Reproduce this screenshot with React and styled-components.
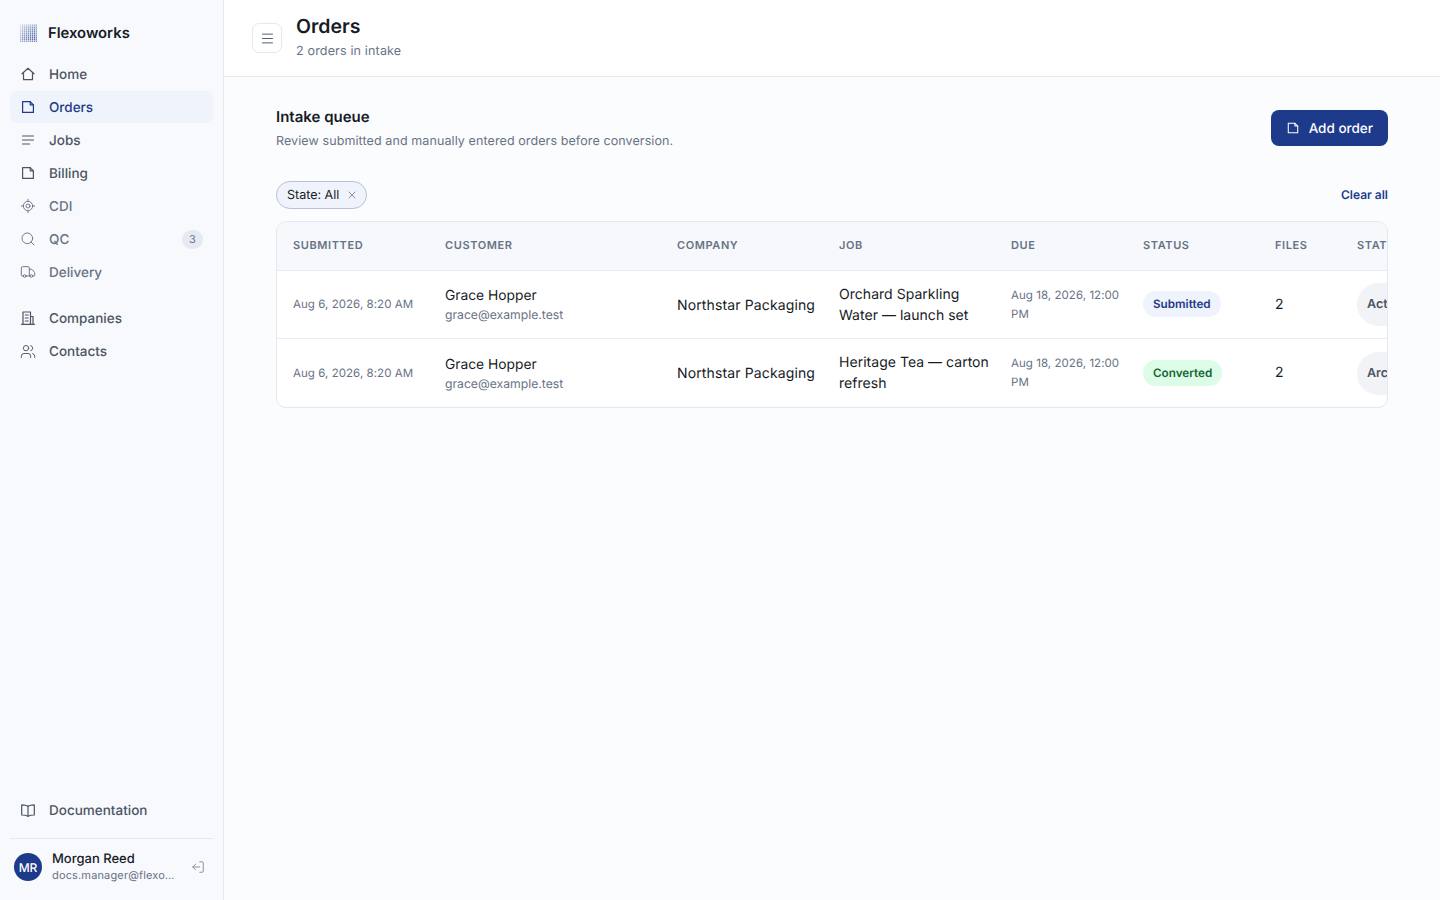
import styled, { createGlobalStyle } from 'styled-components';
import { LocateFixed, LogOut, Menu, Search, Truck, Users, X } from 'lucide-react';

const GlobalStyle = createGlobalStyle`
  html, body { margin: 0; height: 100%; }
  body {
    font-family: Inter, "Liberation Sans", sans-serif;
    color: #171b26;
    background: #fbfcfe;
    text-rendering: geometricPrecision;
  }
  * { box-sizing: border-box; }
`;

const Shell = styled.div`
  display: flex;
  width: 1440px;
  height: 900px;
  overflow: hidden;
`;

//! Sidebar
const Sidebar = styled.aside`
  flex: 0 0 224px;
  display: flex;
  flex-direction: column;
  padding: 0 10px 5px;
  background: #f7f9fd;
  border-right: 1px solid #e4e8ef;
`;

const Brand = styled.div`
  display: flex;
  align-items: center;
  gap: 11px;
  height: 58px;
  padding: 7px 0 0 9px;
  font-size: 14.8px;
  font-weight: 600;
  color: #171b26;
`;

const NavGroup = styled.nav`
  display: flex;
  flex-direction: column;
  gap: 1px;
  margin-bottom: ${(p) => p.$gap || 0}px;
`;

const NavItem = styled.div`
  display: flex;
  align-items: center;
  gap: 13px;
  height: 32px;
  padding: 0 10px;
  border-radius: 8px;
  font-size: 13.5px;
  font-weight: 500;
  color: ${(p) => (p.$active ? '#1e3a8a' : p.$muted ? '#687285' : '#4b5563')};
  background: ${(p) => (p.$active ? '#eff3fb' : 'transparent')};
  svg { flex: 0 0 16px; }
`;

const NavLabel = styled.span`
  flex: 1;
  padding-top: 2px;
`;

const CountBadge = styled.span`
  display: flex;
  align-items: center;
  justify-content: center;
  width: 21px;
  height: 19px;
  border-radius: 10px;
  background: #e5eaf2;
  color: #687285;
  font-size: 11px;
  font-weight: 400;
`;

const SidebarBottom = styled.div`
  margin-top: auto;
`;

const UserRow = styled.div`
  display: flex;
  align-items: center;
  height: 57px;
  margin-top: 12px;
  padding: 0 8px 0 4px;
  border-top: 1px solid #e4e8ef;
`;

const Avatar = styled.div`
  display: flex;
  align-items: center;
  justify-content: center;
  flex: 0 0 28px;
  height: 28px;
  border-radius: 50%;
  background: #1e3a8a;
  color: #fff;
  font-size: 12px;
  font-weight: 500;
`;

const UserInfo = styled.div`
  flex: 1;
  min-width: 0;
  margin-left: 10px;
`;

const UserName = styled.div`
  font-size: 13px;
  font-weight: 500;
  line-height: 16px;
  color: #171b26;
`;

const UserMail = styled.div`
  width: 124px;
  font-size: 11px;
  line-height: 16px;
  letter-spacing: 0.15px;
  color: #687285;
  white-space: nowrap;
  overflow: hidden;
  text-overflow: ellipsis;
`;

const SignOut = styled.span`
  display: flex;
  color: #7c8594;
`;

//! Main
const Main = styled.main`
  flex: 1;
  min-width: 0;
  display: flex;
  flex-direction: column;
`;

const TopBar = styled.header`
  display: flex;
  align-items: center;
  gap: 14px;
  height: 77px;
  padding: 0 28px;
  background: #fff;
  border-bottom: 1px solid #e4e8ef;
`;

const MenuButton = styled.button`
  display: flex;
  align-items: center;
  justify-content: center;
  width: 30px;
  height: 30px;
  padding: 0;
  border: 1px solid #e4e8ef;
  border-radius: 7px;
  background: #fff;
  color: #4b5563;
`;

const PageTitle = styled.h1`
  margin: 0;
  font-size: 19.5px;
  font-weight: 600;
  line-height: 24px;
  color: #171b26;
`;

const PageSub = styled.div`
  margin-top: 4px;
  font-size: 12.5px;
  line-height: 20px;
  letter-spacing: 0.17px;
  color: #687285;
`;

const Content = styled.div`
  padding: 30px 52px 0;
`;

const SectionHead = styled.div`
  display: flex;
  align-items: flex-start;
  justify-content: space-between;
  height: 74px;
`;

const SectionTitle = styled.h2`
  margin: 0;
  font-size: 15px;
  font-weight: 600;
  line-height: 20px;
  color: #171b26;
`;

const SectionSub = styled.p`
  margin: 5px 0 0;
  font-size: 12.5px;
  line-height: 20px;
  letter-spacing: 0.1px;
  color: #687285;
`;

const AddButton = styled.button`
  display: flex;
  align-items: center;
  gap: 9px;
  height: 36px;
  margin-top: 3px;
  padding: 2px 15px 0;
  border: 0;
  border-radius: 8px;
  background: #1e3a8a;
  color: #fff;
  font-family: inherit;
  font-size: 13.5px;
  font-weight: 500;
  text-rendering: inherit;
  svg { margin-top: -2px; }
`;

const FilterRow = styled.div`
  display: flex;
  align-items: center;
  justify-content: space-between;
  height: 28px;
  margin-bottom: 12px;
`;

const FilterChip = styled.div`
  display: flex;
  align-items: center;
  gap: 7px;
  height: 28px;
  padding: 0 8px 0 10px;
  border: 1px solid #b9c2d6;
  border-radius: 14px;
  background: #eff3fb;
  color: #171b26;
  font-size: 12.5px;
  font-weight: 400;
  svg { color: #687285; }
`;

const ClearAll = styled.span`
  padding-bottom: 2px;
  font-size: 12px;
  font-weight: 600;
  color: #1e3a8a;
`;

const TableWrap = styled.div`
  border: 1px solid #e4e8ef;
  border-radius: 10px;
  overflow: hidden;
  background: #fff;
`;

const Table = styled.table`
  width: 1250px;
  table-layout: fixed;
  border-collapse: collapse;
`;

const Th = styled.th`
  width: ${(p) => p.$w}px;
  height: 48px;
  padding: 0 16px 2px;
  background: #f6f8fb;
  border-bottom: 1px solid #e9ecf2;
  text-align: left;
  font-size: 11px;
  font-weight: 600;
  letter-spacing: 0.6px;
  text-transform: uppercase;
  white-space: nowrap;
  color: #687285;
`;

const Row = styled.tr`
  & + & td { border-top: 1px solid #e9ecf2; height: 69px; }
`;

const Td = styled.td`
  height: 68px;
  padding: ${(p) => p.$top ?? 2}px ${(p) => p.$right ?? 8}px 0 16px;
  font-size: 14px;
  line-height: 21px;
  letter-spacing: 0.03px;
  color: #171b26;
`;

const DateText = styled.span`
  display: block;
  font-size: 11.5px;
  line-height: 19px;
  letter-spacing: 0.05px;
  white-space: ${(p) => (p.$wrap ? 'normal' : 'nowrap')};
  color: #687285;
`;

const CustomerName = styled.div`
  font-size: 13.8px;
  line-height: 20px;
  letter-spacing: 0;
`;

const CustomerMail = styled.div`
  font-size: 12.2px;
  line-height: 18px;
  letter-spacing: 0;
  color: #687285;
`;

const CompanyName = styled.span`
  white-space: nowrap;
  letter-spacing: 0.13px;
`;

const StatusPill = styled.span`
  display: inline-block;
  padding: 0 10px;
  height: 26px;
  border-radius: 13px;
  font-size: 11.7px;
  font-weight: 600;
  line-height: 26px;
  letter-spacing: 0;
  color: ${(p) => (p.$green ? '#166534' : '#1e3a8a')};
  background: ${(p) => (p.$green ? '#dcfce7' : '#eff3fb')};
`;

const StatePill = styled.span`
  display: inline-flex;
  align-items: center;
  height: 43px;
  padding: 0 14px 0 10px;
  border-radius: 22px;
  background: #f1f3f7;
  font-size: 12.5px;
  font-weight: 600;
  letter-spacing: 0;
  color: #4b5563;
`;

const Icon = ({ size = 16, width = 1.2, children }) => (
  <svg width={size} height={size} viewBox="0 0 16 16" fill="none" stroke="currentColor" strokeWidth={width} strokeLinecap="round" strokeLinejoin="round">
    {children}
  </svg>
);

const FileIcon = ({ size }) => (
  <Icon size={size}>
    <path d="M2.600 2.600h7.600l3.200 3.200v7.600H2.600z" />
    <path d="M10.200 2.600v3.200h3.200" />
  </Icon>
);

const HomeIcon = () => (
  <Icon>
    <path d="M2 7.800 8 2.300l6 5.500" />
    <path d="M3.500 6.500v7.200h9V6.500" />
  </Icon>
);

const LinesIcon = () => (
  <Icon>
    <path d="M2.500 4h11M2.500 8h11M2.500 12h7" />
  </Icon>
);

const BuildingIcon = () => (
  <Icon>
    <path d="M1.500 14.300h13" />
    <path d="M3 14.300V2h7.500v12.300" />
    <path d="M10.500 6.500H13v7.800" />
    <path d="M5.300 5h2.900M5.300 8h2.900M5.300 11h2.900" />
  </Icon>
);

const BookIcon = () => (
  <Icon>
    <path d="M8 4.200v10" />
    <path d="M8 4.200C6.500 3.200 4 2.800 1.700 2.800v10.200c2.300 0 4.800.300 6.300 1.300 1.500-1 4-1.300 6.300-1.300V2.800C12 2.800 9.500 3.200 8 4.200z" />
  </Icon>
);

// dotted square, fades out at the top left and along the edges
const LogoMark = () => {
  const dots = [];
  for (let y = 0; y < 9; y++) {
    for (let x = 0; x < 9; x++) {
      const edge = Math.min(x, y, 8 - x, 8 - y);
      const fade = edge === 0 ? 0.7 : 1;
      dots.push(
        <rect key={`${x}-${y}`} x={x * 2 + 1} y={y * 2 + 0.5} width="1.300" height="1.300" fill="#1e3a8a" opacity={(0.25 + (x + y) * 0.05) * fade} />
      );
    }
  }
  return (
    <svg width="18" height="18" viewBox="0 0 18 18">
      {dots}
    </svg>
  );
};

const navMain = [
  { label: 'Home', icon: <HomeIcon /> },
  { label: 'Orders', icon: <FileIcon />, active: true },
  { label: 'Jobs', icon: <LinesIcon /> },
  { label: 'Billing', icon: <FileIcon /> },
  { label: 'CDI', icon: <LocateFixed size={16} strokeWidth={1.4} />, muted: true },
  { label: 'QC', icon: <Search size={16} strokeWidth={1.4} />, muted: true, count: 3 },
  { label: 'Delivery', icon: <Truck size={16} strokeWidth={1.4} />, muted: true },
];

const navRecords = [
  { label: 'Companies', icon: <BuildingIcon /> },
  { label: 'Contacts', icon: <Users size={17} strokeWidth={1.4} /> },
];

const columns = [
  ['Submitted', 152],
  ['Customer', 232],
  ['Company', 162],
  ['Job', 172],
  ['Due', 132],
  ['Status', 132],
  ['Files', 82],
  ['State', 186],
];

const orders = [
  { job: 'Orchard Sparkling Water — launch set', status: 'Submitted', state: 'Active' },
  { job: 'Heritage Tea — carton refresh', status: 'Converted', green: true, state: 'Archive' },
];

const NavList = ({ items, gap }) => (
  <NavGroup $gap={gap}>
    {items.map((item) => (
      <NavItem key={item.label} $active={item.active} $muted={item.muted}>
        {item.icon}
        <NavLabel>{item.label}</NavLabel>
        {item.count && <CountBadge>{item.count}</CountBadge>}
      </NavItem>
    ))}
  </NavGroup>
);

const App = () => {
  return (
    <Shell>
      <GlobalStyle />
      <Sidebar>
        <Brand>
          <LogoMark />
          Flexoworks
        </Brand>
        <NavList items={navMain} gap={14} />
        <NavList items={navRecords} />
        <SidebarBottom>
          <NavItem>
            <BookIcon />
            <NavLabel>Documentation</NavLabel>
          </NavItem>
          <UserRow>
            <Avatar>MR</Avatar>
            <UserInfo>
              <UserName>Morgan Reed</UserName>
              <UserMail>docs.manager@flexoworks.test</UserMail>
            </UserInfo>
            <SignOut>
              <LogOut size={14} strokeWidth={1.5} style={{ transform: 'scaleX(-1)' }} />
            </SignOut>
          </UserRow>
        </SidebarBottom>
      </Sidebar>
      <Main>
        <TopBar>
          <MenuButton>
            <Menu size={15} strokeWidth={1.5} />
          </MenuButton>
          <div>
            <PageTitle>Orders</PageTitle>
            <PageSub>2 orders in intake</PageSub>
          </div>
        </TopBar>
        <Content>
          <SectionHead>
            <div>
              <SectionTitle>Intake queue</SectionTitle>
              <SectionSub>Review submitted and manually entered orders before conversion.</SectionSub>
            </div>
            <AddButton>
              <FileIcon size={14} />
              Add order
            </AddButton>
          </SectionHead>
          <FilterRow>
            <FilterChip>
              State: All
              <X size={12} strokeWidth={1.5} />
            </FilterChip>
            <ClearAll>Clear all</ClearAll>
          </FilterRow>
          <TableWrap>
            <Table>
              <thead>
                <tr>
                  {columns.map(([name, w]) => (
                    <Th key={name} $w={w}>{name}</Th>
                  ))}
                </tr>
              </thead>
              <tbody>
                {orders.map((order) => (
                  <Row key={order.job}>
                    <Td $top={1}><DateText>Aug 6, 2026, 8:20 AM</DateText></Td>
                    <Td>
                      <CustomerName>Grace Hopper</CustomerName>
                      <CustomerMail>grace@example.test</CustomerMail>
                    </Td>
                    <Td><CompanyName>Northstar Packaging</CompanyName></Td>
                    <Td $right={4} $top={1}>{order.job}</Td>
                    <Td $right={4} $top={1}><DateText $wrap>Aug 18, 2026, 12:00 PM</DateText></Td>
                    <Td $top={0}><StatusPill $green={order.green}>{order.status}</StatusPill></Td>
                    <Td $top={0}>2</Td>
                    <Td $top={1}><StatePill>{order.state}</StatePill></Td>
                  </Row>
                ))}
              </tbody>
            </Table>
          </TableWrap>
        </Content>
      </Main>
    </Shell>
  );
};

export default App;
